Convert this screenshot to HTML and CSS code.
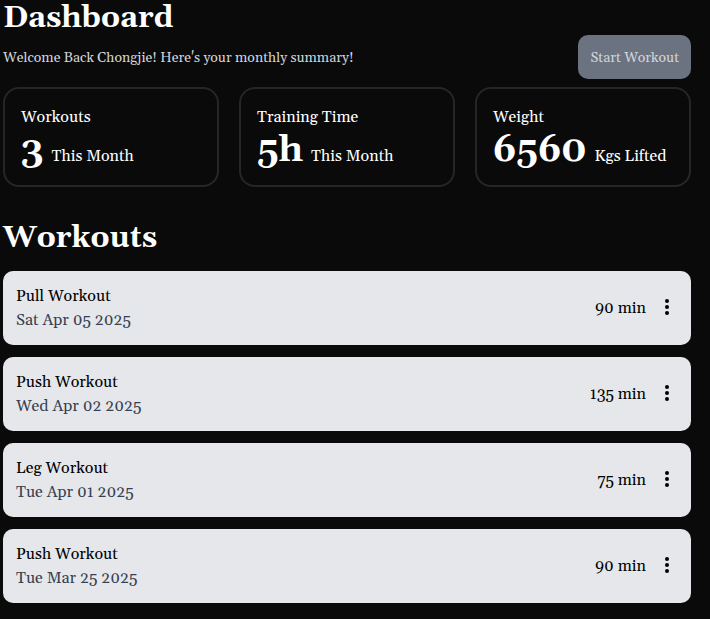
FILE: index.html
```html
<!DOCTYPE html>
<html lang="en">
<head>
<meta charset="utf-8">
<title>Dashboard</title>
<link rel="stylesheet" href="styles.css">
</head>
<body>
<main class="page">
  <h1 class="title">Dashboard</h1>
  <div class="intro">
    <p class="welcome">Welcome Back Chongjie! Here's your monthly summary!</p>
    <button class="start" type="button">Start Workout</button>
  </div>
  <section class="stats">
    <div class="stat"><h2 class="stat-name">Workouts</h2><p class="stat-line"><strong class="stat-value">3</strong><span>This Month</span></p></div>
    <div class="stat"><h2 class="stat-name">Training Time</h2><p class="stat-line"><strong class="stat-value">5h</strong><span>This Month</span></p></div>
    <div class="stat"><h2 class="stat-name">Weight</h2><p class="stat-line"><strong class="stat-value">6560</strong><span>Kgs Lifted</span></p></div>
  </section>
  <h2 class="title title-list">Workouts</h2>
  <ul class="list">
    <li class="row">
      <div class="info"><p>Pull Workout</p><p class="date">Sat Apr 05 2025</p></div>
      <span>90 min</span>
      <button class="more" type="button" aria-label="Options"><svg viewBox="0 0 20 20" width="20" height="20"><circle cx="9" cy="3" r="2"/><circle cx="9" cy="9" r="2"/><circle cx="9" cy="15" r="2"/></svg></button>
    </li>
    <li class="row">
      <div class="info"><p>Push Workout</p><p class="date">Wed Apr 02 2025</p></div>
      <span>135 min</span>
      <button class="more" type="button" aria-label="Options"><svg viewBox="0 0 20 20" width="20" height="20"><circle cx="9" cy="3" r="2"/><circle cx="9" cy="9" r="2"/><circle cx="9" cy="15" r="2"/></svg></button>
    </li>
    <li class="row">
      <div class="info"><p>Leg Workout</p><p class="date">Tue Apr 01 2025</p></div>
      <span>75 min</span>
      <button class="more" type="button" aria-label="Options"><svg viewBox="0 0 20 20" width="20" height="20"><circle cx="9" cy="3" r="2"/><circle cx="9" cy="9" r="2"/><circle cx="9" cy="15" r="2"/></svg></button>
    </li>
    <li class="row">
      <div class="info"><p>Push Workout</p><p class="date">Tue Mar 25 2025</p></div>
      <span>90 min</span>
      <button class="more" type="button" aria-label="Options"><svg viewBox="0 0 20 20" width="20" height="20"><circle cx="9" cy="3" r="2"/><circle cx="9" cy="9" r="2"/><circle cx="9" cy="15" r="2"/></svg></button>
    </li>
  </ul>
</main>
</body>
</html>
```
FILE: styles.css
```css
* { box-sizing: border-box; margin: 0; padding: 0; }
body {
  background: #0a0a0a;
  color: #fff;
  font: 16px/24px Georgia, Gelasio, "DejaVu Serif", "Liberation Serif", serif;
}
.page { padding: 0 19px 16px 3px; }
.title { margin-bottom: -1px; font-size: 30px; line-height: 36px; font-weight: 700; }
.intro { display: flex; align-items: center; justify-content: space-between; }
.welcome { padding-top: 2px; font-size: 14px; line-height: 20px; color: #d1d5db; }
.start {
  height: 44px;
  padding: 2px 12px 0;
  border: 0;
  border-radius: 10px;
  background: #6b7280;
  color: #d1d5db;
  font: inherit;
  font-size: 14px;
}
.stats { display: grid; grid-template-columns: repeat(3, 1fr); gap: 20px; margin-top: 8px; }
.stat { padding: 16px 16px 12px; border: 2px solid #262626; border-radius: 16px; }
.stat-name { font-size: 16px; font-weight: 400; }
.stat-line { display: flex; align-items: baseline; gap: 8px; }
.stat-value { font-size: 36px; line-height: 44px; }
.title-list { margin-top: 33px; }
.list { display: grid; gap: 12px; padding-top: 16px; list-style: none; }
.row {
  display: flex;
  align-items: center;
  padding: 13px;
  border-radius: 10px;
  background: #e5e7eb;
  color: #000;
}
.info { flex: 1; }
.date { color: #374151; }
.more { display: flex; margin-left: 12px; border: 0; background: none; }
```
